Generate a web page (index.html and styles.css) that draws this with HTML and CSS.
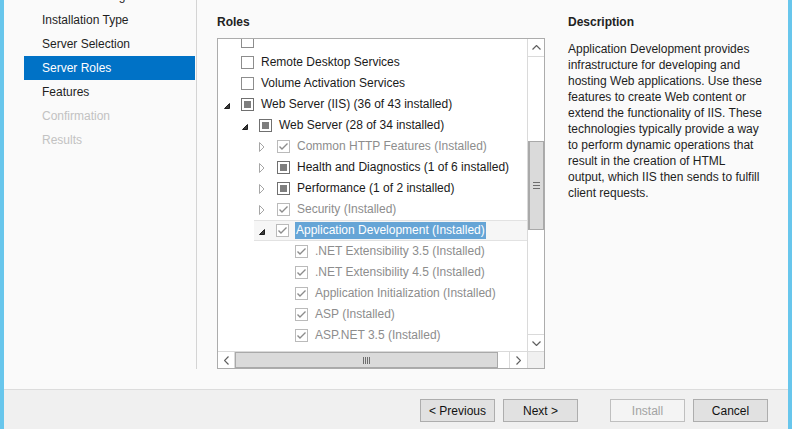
FILE: index.html
```html
<!DOCTYPE html>
<html>
<head>
<meta charset="utf-8">
<title>Add Roles and Features Wizard</title>
<link rel="stylesheet" href="styles.css">
</head>
<body>
<div class="frame">
  <div class="main">
    <nav class="nav">
      <ul>
        <li>Before You Begin</li>
        <li>Installation Type</li>
        <li>Server Selection</li>
        <li class="active">Server Roles</li>
        <li>Features</li>
        <li class="off">Confirmation</li>
        <li class="off">Results</li>
      </ul>
    </nav>
    <section class="content">
      <div class="roles">
        <div class="label">Roles</div>
        <div class="tree">
          <div class="viewport">
            <div class="rows">
              <div class="row l0"><span class="exp"></span><span class="cb"></span></div>
              <div class="row l0"><span class="exp"></span><span class="cb"></span><span class="txt">Remote Desktop Services</span></div>
              <div class="row l0"><span class="exp"></span><span class="cb"></span><span class="txt">Volume Activation Services</span></div>
              <div class="row l0"><span class="exp"><svg class="open" width="6" height="6" viewBox="0 0 6 6"><polygon points="5.5,0.5 5.5,5.5 0.5,5.5"/></svg></span><span class="cb part"></span><span class="txt">Web Server (IIS) (36 of 43 installed)</span></div>
              <div class="row l1"><span class="exp"><svg class="open" width="6" height="6" viewBox="0 0 6 6"><polygon points="5.5,0.5 5.5,5.5 0.5,5.5"/></svg></span><span class="cb part"></span><span class="txt">Web Server (28 of 34 installed)</span></div>
              <div class="row l2 dim"><span class="exp"><svg class="shut" width="6" height="10" viewBox="0 0 6 10"><polygon points="0.5,0.5 5,5 0.5,9.5"/></svg></span><span class="cb done"><svg width="11" height="11" viewBox="0 0 11 11"><polyline points="1.5,5.5 4,8 9.5,2.5"/></svg></span><span class="txt">Common HTTP Features (Installed)</span></div>
              <div class="row l2"><span class="exp"><svg class="shut" width="6" height="10" viewBox="0 0 6 10"><polygon points="0.5,0.5 5,5 0.5,9.5"/></svg></span><span class="cb part"></span><span class="txt">Health and Diagnostics (1 of 6 installed)</span></div>
              <div class="row l2"><span class="exp"><svg class="shut" width="6" height="10" viewBox="0 0 6 10"><polygon points="0.5,0.5 5,5 0.5,9.5"/></svg></span><span class="cb part"></span><span class="txt">Performance (1 of 2 installed)</span></div>
              <div class="row l2 dim"><span class="exp"><svg class="shut" width="6" height="10" viewBox="0 0 6 10"><polygon points="0.5,0.5 5,5 0.5,9.5"/></svg></span><span class="cb done"><svg width="11" height="11" viewBox="0 0 11 11"><polyline points="1.5,5.5 4,8 9.5,2.5"/></svg></span><span class="txt">Security (Installed)</span></div>
              <div class="row l2 sel"><span class="exp"><svg class="open" width="6" height="6" viewBox="0 0 6 6"><polygon points="5.5,0.5 5.5,5.5 0.5,5.5"/></svg></span><span class="cb done"><svg width="11" height="11" viewBox="0 0 11 11"><polyline points="1.5,5.5 4,8 9.5,2.5"/></svg></span><span class="txt">Application Development (Installed)</span></div>
              <div class="row l3 dim"><span class="exp"></span><span class="cb done"><svg width="11" height="11" viewBox="0 0 11 11"><polyline points="1.5,5.5 4,8 9.5,2.5"/></svg></span><span class="txt">.NET Extensibility 3.5 (Installed)</span></div>
              <div class="row l3 dim"><span class="exp"></span><span class="cb done"><svg width="11" height="11" viewBox="0 0 11 11"><polyline points="1.5,5.5 4,8 9.5,2.5"/></svg></span><span class="txt">.NET Extensibility 4.5 (Installed)</span></div>
              <div class="row l3 dim"><span class="exp"></span><span class="cb done"><svg width="11" height="11" viewBox="0 0 11 11"><polyline points="1.5,5.5 4,8 9.5,2.5"/></svg></span><span class="txt">Application Initialization (Installed)</span></div>
              <div class="row l3 dim"><span class="exp"></span><span class="cb done"><svg width="11" height="11" viewBox="0 0 11 11"><polyline points="1.5,5.5 4,8 9.5,2.5"/></svg></span><span class="txt">ASP (Installed)</span></div>
              <div class="row l3 dim"><span class="exp"></span><span class="cb done"><svg width="11" height="11" viewBox="0 0 11 11"><polyline points="1.5,5.5 4,8 9.5,2.5"/></svg></span><span class="txt">ASP.NET 3.5 (Installed)</span></div>
            </div>
          </div>
          <div class="vscroll">
            <div class="sbtn up"><svg width="9" height="5" viewBox="0 0 9 5"><polyline points="0.5,4.5 4.5,0.5 8.5,4.5"/></svg></div>
            <div class="track">
              <div class="vthumb"><span class="vgrip"></span></div>
            </div>
            <div class="sbtn down"><svg width="9" height="5" viewBox="0 0 9 5"><polyline points="0.5,0.5 4.5,4.5 8.5,0.5"/></svg></div>
          </div>
          <div class="hscroll">
            <div class="sbtn left"><svg width="5" height="9" viewBox="0 0 5 9"><polyline points="4.5,0.5 0.5,4.5 4.5,8.5"/></svg></div>
            <div class="hthumb"><span class="hgrip"></span></div>
            <div class="htrack"></div>
            <div class="sbtn right"><svg width="5" height="9" viewBox="0 0 5 9"><polyline points="0.5,0.5 4.5,4.5 0.5,8.5"/></svg></div>
          </div>
          <div class="corner"></div>
        </div>
      </div>
      <div class="desc">
        <div class="label">Description</div>
        <p>Application Development provides<br>infrastructure for developing and<br>hosting Web applications. Use these<br>features to create Web content or<br>extend the functionality of IIS. These<br>technologies typically provide a way<br>to perform dynamic operations that<br>result in the creation of HTML<br>output, which IIS then sends to fulfill<br>client requests.</p>
      </div>
    </section>
  </div>
  <footer class="footer">
    <button class="btn">&lt; Previous</button>
    <button class="btn">Next &gt;</button>
    <button class="btn install" disabled>Install</button>
    <button class="btn">Cancel</button>
  </footer>
</div>
</body>
</html>
```

FILE: styles.css
```css
html, body {
  margin: 0;
  padding: 0;
}
body {
  width: 792px;
  height: 429px;
  overflow: hidden;
  background: #fafafa;
  font-family: "Liberation Sans", Arial, sans-serif;
  font-size: 12px;
  color: #1e1e1e;
}
.frame {
  box-sizing: border-box;
  height: 429px;
  border-left: 4px solid #68c6ec;
  border-right: 4px solid #68c6ec;
  display: flex;
  flex-direction: column;
}
.main {
  height: 389px;
  display: flex;
}

/* left navigation */
.nav {
  box-sizing: border-box;
  width: 193px;
  height: 369px;
  border-right: 1px solid #d4d4d4;
  padding-left: 20px;
  padding-right: 1px;
  overflow: hidden;
  flex: none;
}
.nav ul {
  list-style: none;
  margin: -16px 0 0;
  padding: 0;
}
.nav li {
  height: 24px;
  line-height: 24px;
  padding-left: 18px;
  white-space: nowrap;
}
.nav li.active {
  background: #0072c6;
  color: #fff;
}
.nav li.off {
  color: #c2c2c2;
}

/* content */
.content {
  flex: 1;
  display: flex;
  gap: 23px;
  padding: 14px 0 0 20px;
}
.label {
  font-weight: bold;
  line-height: 16px;
  height: 16px;
  color: #222;
}
.roles {
  width: 328px;
  flex: none;
}
.tree {
  box-sizing: border-box;
  margin-top: 8px;
  width: 328px;
  height: 331px;
  border: 1px solid #acacac;
  display: grid;
  grid-template-columns: 309px 17px;
  grid-template-rows: 312px 17px;
  background: #fff;
}
.viewport {
  overflow: hidden;
  background: #fff;
}
.rows {
  margin-top: -8px;
}
.row {
  box-sizing: border-box;
  height: 21px;
  display: flex;
  align-items: center;
  padding-left: 5px;
  white-space: nowrap;
}
.l1 { margin-left: 18px; }
.l2 { margin-left: 36px; }
.l3 { margin-left: 54px; }
.row.sel {
  background: #f6f6f6;
  border-top: 1px solid #e2e2e2;
  border-bottom: 1px solid #e2e2e2;
  padding-left: 4px;
  margin-left: 36px;
}
.exp {
  width: 18px;
  height: 21px;
  flex: none;
  display: flex;
  align-items: center;
}
.exp svg.open {
  margin-left: 1px;
  margin-top: 2px;
}
.exp svg.open polygon {
  fill: #3c3c3c;
  stroke: #1e1e1e;
  stroke-width: 1;
  stroke-linejoin: miter;
}
.exp svg.shut polygon {
  fill: none;
  stroke: #a6a6a6;
  stroke-width: 1;
}
.cb {
  box-sizing: border-box;
  width: 13px;
  height: 13px;
  flex: none;
  border: 1px solid #8d8d8d;
  background: #fff;
  display: flex;
  align-items: center;
  justify-content: center;
}
.cb.part::after {
  content: "";
  width: 7px;
  height: 7px;
  background: #7e7e7e;
}
.cb.part {
  border-color: #707070;
}
.cb.done {
  border-color: #bababa;
}
.cb.done polyline {
  fill: none;
  stroke: #8c8c8c;
  stroke-width: 1.4;
}
.txt {
  margin-left: 7px;
  line-height: 17px;
  color: #1a1a1a;
}
.dim .txt {
  color: #8d8d8d;
}
.sel .txt {
  background: #66a5d6;
  color: #fff;
  margin-left: 6px;
  padding: 0 1px;
}

/* scrollbars */
.vscroll {
  display: flex;
  flex-direction: column;
  border-left: 1px solid #dadada;
  background: #fff;
}
.sbtn {
  flex: none;
  display: flex;
  align-items: center;
  justify-content: center;
  background: #fff;
}
.sbtn polyline {
  fill: none;
  stroke: #606060;
  stroke-width: 1.2;
}
.sbtn.up {
  height: 17px;
  border-bottom: 1px solid #dadada;
}
.sbtn.down {
  height: 16px;
  border-top: 1px solid #dadada;
}
.track {
  flex: 1;
}
.vthumb {
  box-sizing: border-box;
  margin-top: 84px;
  height: 89px;
  background: #dadada;
  border: 1px solid #a9a9a9;
  border-left-width: 2px;
  border-right-width: 1px;
  display: flex;
  align-items: center;
  justify-content: center;
}
.vgrip {
  width: 7px;
  height: 7px;
  background: repeating-linear-gradient(to bottom, #6e6e6e 0 1px, #dadada 1px 3px);
}
.hscroll {
  display: flex;
  border-top: 1px solid #dadada;
  background: #fff;
}
.sbtn.left {
  width: 16px;
  border-right: 1px solid #dadada;
}
.sbtn.right {
  width: 17px;
  border-left: 1px solid #dadada;
}
.hthumb {
  box-sizing: border-box;
  width: 263px;
  flex: none;
  background: #dadada;
  border: 1px solid #a9a9a9;
  display: flex;
  align-items: center;
  justify-content: center;
}
.hgrip {
  width: 7px;
  height: 7px;
  background: repeating-linear-gradient(to right, #6e6e6e 0 1px, #dadada 1px 2px);
}
.htrack {
  flex: 1;
}
.corner {
  background: #f0f0f0;
  border-top: 1px solid #dadada;
  border-left: 1px solid #dadada;
}

/* description */
.desc {
  width: 210px;
  flex: none;
}
.desc p {
  margin: 11px 0 0;
  line-height: 16px;
  white-space: nowrap;
  color: #1e1e1e;
}

/* footer */
.footer {
  box-sizing: border-box;
  height: 40px;
  border-top: 1px solid #dcdcdc;
  background: #f0f0f0;
  display: flex;
  justify-content: flex-end;
  align-items: flex-start;
  padding: 9px 20px 0 0;
}
.btn {
  box-sizing: border-box;
  width: 75px;
  height: 23px;
  margin-left: 8px;
  border: 1px solid #adadad;
  background: #e1e1e1;
  font-family: "Liberation Sans", Arial, sans-serif;
  font-size: 12px;
  color: #111;
  padding: 0;
  border-radius: 0;
}
.btn.install {
  margin-left: 32px;
  background: #f4f4f4;
  border-color: #bfbfbf;
  color: #a3a3a3;
}
```
